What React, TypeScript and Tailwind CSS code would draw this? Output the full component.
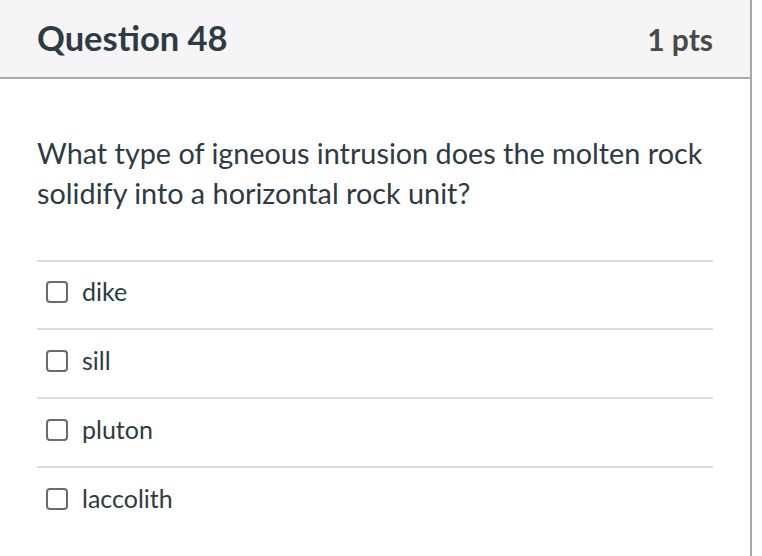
const ANSWERS = ["dike", "sill", "pluton", "laccolith"];

export default function App() {
  return (
    <div className="w-[762px] h-[556px] bg-white overflow-hidden" style={{ fontFamily: "Lato, 'Open Sans', sans-serif" }}>
      <div className="w-[752px] h-[556px] border-r-2 border-[#a9a9a9] flex flex-col">
        <div className="h-[79px] bg-[#f5f5f5] border-b-2 border-[#a9a9a9] flex items-center justify-between pl-[37px] pr-[37px]">
          <h2 className="text-[34.5px] font-bold text-[#2d3b45] leading-none">Question 48</h2>
          <span className="text-[30px] font-bold text-[#4a4a4a] leading-none">1 pts</span>
        </div>
        <div className="pl-[37px] pr-[37px] pt-[54px]">
          <p className="text-[28.8px] leading-[40px] text-[#2d3b45]">
            What type of igneous intrusion does the molten rock solidify into a horizontal rock unit?
          </p>
          <div className="mt-[47px]">
            {ANSWERS.map((a) => (
              <div key={a} className="border-t-2 border-[#dcdcdc] h-[69px] flex items-center pl-[9px] gap-[14px] first:h-[68px]">
                <span className="w-[22px] h-[22px] rounded-[4px] border-2 border-[#6b6b6b] bg-white flex-shrink-0 -mt-[6px]" />
                <span className="text-[25px] text-[#2d3b45] -mt-[6px]">{a}</span>
              </div>
            ))}
          </div>
        </div>
      </div>
    </div>
  );
}
